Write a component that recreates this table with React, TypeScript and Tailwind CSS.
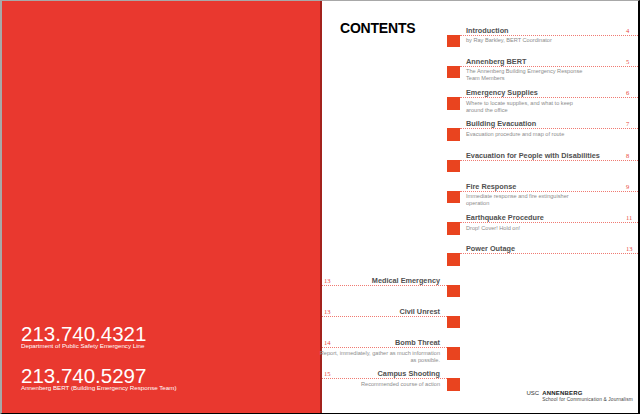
import React from "react";

type Entry = {
  title: string;
  desc?: string[];
  page: string;
  side: "right" | "left";
};

const ENTRIES: Entry[] = [
  { title: "Introduction", desc: ["by Ray Barkley, BERT Coordinator"], page: "4", side: "right" },
  { title: "Annenberg BERT", desc: ["The Annenberg Building Emergency Response", "Team Members"], page: "5", side: "right" },
  { title: "Emergency Supplies", desc: ["Where to locate supplies, and what to keep", "around the office"], page: "6", side: "right" },
  { title: "Building Evacuation", desc: ["Evacuation procedure and map of route"], page: "7", side: "right" },
  { title: "Evacuation for People with Disabilities", page: "8", side: "right" },
  { title: "Fire Response", desc: ["Immediate response and fire extinguisher", "operation"], page: "9", side: "right" },
  { title: "Earthquake Procedure", desc: ["Drop! Cover! Hold on!"], page: "11", side: "right" },
  { title: "Power Outage", page: "13", side: "right" },
  { title: "Medical Emergency", page: "13", side: "left" },
  { title: "Civil Unrest", page: "13", side: "left" },
  { title: "Bomb Threat", desc: ["Report, immediately, gather as much information", "as possible."], page: "14", side: "left" },
  { title: "Campus Shooting", desc: ["Recommended course of action"], page: "15", side: "left" },
];

const sans = { fontFamily: '"Liberation Sans", Arial, sans-serif' };
const serif = { fontFamily: '"Liberation Serif", "Times New Roman", serif' };

function Logo() {
  return (
    <div className="mt-[14px] ml-auto mr-[5px] grid grid-cols-[auto_auto] text-[#333]" style={sans}>
      <span className="text-[6px] leading-[6px] pr-[3px]">USC</span>
      <span className="text-[6px] leading-[6px] font-bold tracking-[0.2px] text-[#222]">ANNENBERG</span>
      <span />
      <span className="text-[4.8px] leading-[5px] mt-[0.5px] whitespace-nowrap tracking-[0.15px] text-[#444]">
        School for Communication &amp; Journalism
      </span>
    </div>
  );
}

function Desc({ lines, align }: { lines?: string[]; align: "start" | "end" }) {
  return (
    <div className={align === "end" ? "flex flex-col items-end" : "flex flex-col items-start"}>
      {lines?.map((d) => (
        <span key={d} className="text-[5.6px] leading-[7.2px] text-[#8c8c8c] whitespace-nowrap" style={sans}>
          {d}
        </span>
      ))}
    </div>
  );
}

function Row({ entry, first, last }: { entry: Entry; first: boolean; last: boolean }) {
  const isRight = entry.side === "right";
  return (
    <div className="flex h-[31.25px]">
      {/* left column */}
      <div className="w-[125px] flex flex-col">
        <div className="h-[8px] flex items-end">
          {first && (
            <span className="pl-[18px] text-[14px] leading-[14px] font-bold text-black tracking-[-0.2px]" style={sans}>
              CONTENTS
            </span>
          )}
          {!isRight && (
            <>
              <span className="pl-[2px] text-[6.5px] leading-[9px] text-[#e8473c]" style={serif}>
                {entry.page}
              </span>
              <span className="ml-auto pr-[7px] text-[7.3px] leading-[8px] font-bold text-[#505050] whitespace-nowrap" style={sans}>
                {entry.title}
              </span>
            </>
          )}
        </div>
        {!isRight && (
          <div className="border-t border-dotted border-[#f07a72] pt-[1.5px] pr-[7px]">
            <Desc lines={entry.desc} align="end" />
          </div>
        )}
      </div>

      {/* square */}
      <div className="w-[13px] pt-[8px]">
        <div className="w-[13px] h-[12.5px] bg-[#e9441f]" />
      </div>

      {/* right column */}
      <div className="flex-1 flex flex-col">
        <div className="h-[8px] flex items-end">
          {isRight && (
            <>
              <span className="pl-[6px] flex-1 text-[7.3px] leading-[8px] font-bold text-[#505050] whitespace-nowrap" style={sans}>
                {entry.title}
              </span>
              <span className="w-[12px] text-[6.5px] leading-[9px] text-[#e8473c]" style={serif}>
                {entry.page}
              </span>
            </>
          )}
        </div>
        {isRight ? (
          <div className="border-t border-dotted border-[#f07a72] pt-[1.5px] pl-[6px]">
            <Desc lines={entry.desc} align="start" />
          </div>
        ) : (
          <div className="flex flex-col">{last && <Logo />}</div>
        )}
      </div>
    </div>
  );
}

export default function App() {
  return (
    <div className="w-[640px] h-[414px] flex border-t border-[#a8a8a8] border-l-2 border-l-[#a8a8a8] border-r-2 border-r-black border-b border-b-black bg-white overflow-hidden">
      {/* Red cover page */}
      <div className="w-[320px] bg-[#e9382f] border-r-2 border-[#a3221c] flex flex-col justify-end pl-[19px] pb-[23px] text-white" style={sans}>
        <div className="flex flex-col">
          <span className="text-[20.5px] leading-[20px]">213.740.4321</span>
          <span className="text-[6.2px] leading-[4px]">Department of Public Safety Emergency Line</span>
        </div>
        <div className="flex flex-col mt-[18px]">
          <span className="text-[20.5px] leading-[20px]">213.740.5297</span>
          <span className="text-[6.2px] leading-[4px]">Annenberg BERT (Building Emergency Response Team)</span>
        </div>
      </div>

      {/* Contents page */}
      <div className="flex-1 flex flex-col pt-[25.5px]">
        {ENTRIES.map((e, i) => (
          <Row key={e.title} entry={e} first={i === 0} last={i === ENTRIES.length - 1} />
        ))}
      </div>
    </div>
  );
}
